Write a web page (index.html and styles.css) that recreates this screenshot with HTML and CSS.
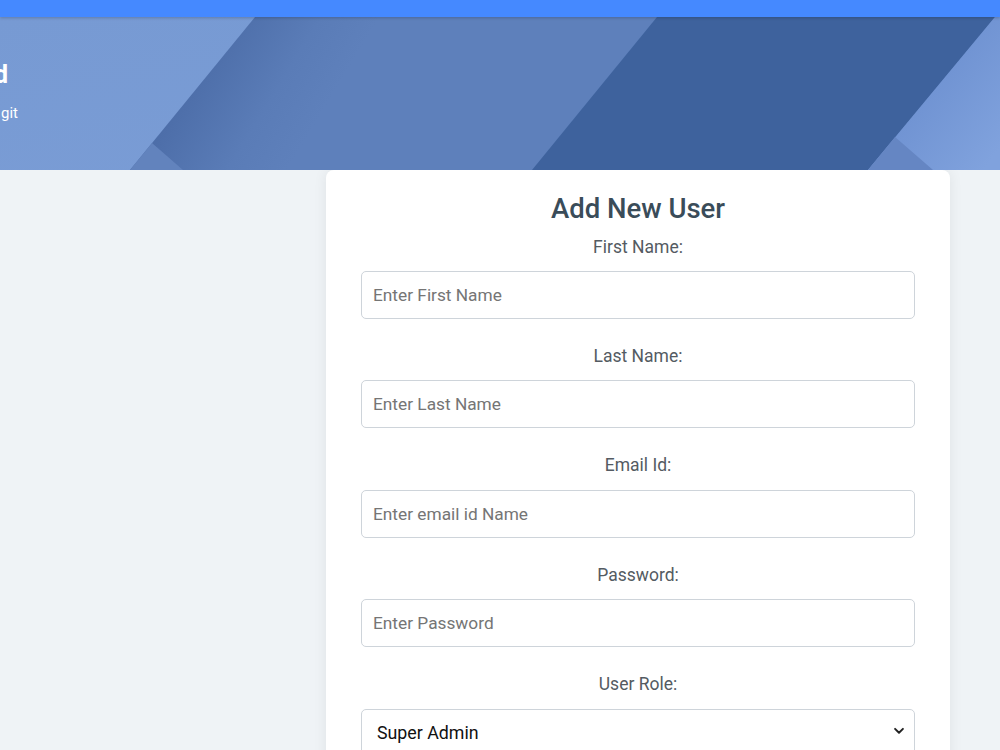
FILE: index.html
```html
<!doctype html>
<html>
<head>
    <title>Add New User</title>
    <link rel="stylesheet" href="styles.css">
</head>

<body>
    <div class="topbar"></div>

    <!-- page header with the polygon artwork -->
    <section class="hero">
        <svg class="hero-art" viewBox="0 0 1000 153" preserveAspectRatio="none">
            <defs>
                <linearGradient id="midShade" gradientUnits="userSpaceOnUse" x1="165" y1="110" x2="273" y2="176">
                    <stop offset="0" stop-color="#4d6ea9"/>
                    <stop offset="0.6" stop-color="#5a7cb7"/>
                    <stop offset="1" stop-color="#5e80bb"/>
                </linearGradient>
                <linearGradient id="rightShade" gradientUnits="userSpaceOnUse" x1="931" y1="76" x2="1000" y2="132">
                    <stop offset="0" stop-color="#7194d3"/>
                    <stop offset="1" stop-color="#80a2dd"/>
                </linearGradient>
                <linearGradient id="leftShade" x1="0" y1="0" x2="1" y2="1">
                    <stop offset="0" stop-color="#779ad3"/>
                    <stop offset="1" stop-color="#7b9dd6"/>
                </linearGradient>
            </defs>
            <rect width="1000" height="153" fill="url(#leftShade)"/>
            <polygon points="255,0 1000,0 1000,153 130,153" fill="url(#midShade)"/>
            <polygon points="152,126 183,153 130,153" fill="#6283bd"/>
            <polygon points="657,0 995,0 868,153 532,153" fill="#3e629d"/>
            <polygon points="995,0 1000,0 1000,153 868,153" fill="url(#rightShade)"/>
            <polygon points="895,120 933,153 868,153" fill="#6586c3"/>
        </svg>
        <div class="hero-text">
            <h1>Dashboard</h1>
            <p>Manage the users of this project from git</p>
        </div>
    </section>

    <main class="content">
        <div class="card">
            <h2>Add New User</h2>
            <form>
                <div class="field">
                    <label for="first">First Name:</label>
                    <input id="first" type="text" placeholder="Enter First Name">
                </div>
                <div class="field">
                    <label for="last">Last Name:</label>
                    <input id="last" type="text" placeholder="Enter Last Name">
                </div>
                <div class="field">
                    <label for="email">Email Id:</label>
                    <input id="email" type="email" placeholder="Enter email id Name">
                </div>
                <div class="field">
                    <label for="pass">Password:</label>
                    <input id="pass" type="password" placeholder="Enter Password">
                </div>
                <div class="field">
                    <label for="role">User Role:</label>
                    <div class="select-wrap">
                        <select id="role">
                            <option>Super Admin</option>
                            <option>Admin</option>
                            <option>User</option>
                        </select>
                        <svg class="chevron" viewBox="0 0 16 16">
                            <path d="M3.5 5.5l4.5 4.5 4.5-4.5" fill="none" stroke="#222" stroke-width="2.2" stroke-linecap="round" stroke-linejoin="round"/>
                        </svg>
                    </div>
                </div>
            </form>
        </div>
    </main>
</body>

</html>
```

FILE: styles.css
```css
html, body {
    margin: 0;
    font-family: Roboto, "Liberation Sans", sans-serif;
    background-color: #eff3f6;
}

.topbar {
    position: relative;
    z-index: 2;
    height: 17px;
    background-color: #4589ff;
    box-shadow: 0 1px 3px rgba(0, 0, 0, 0.2);
}

.hero {
    position: relative;
    height: 153px;
    overflow: hidden;
}

.hero-art {
    position: absolute;
    top: 0;
    left: 0;
    width: 100%;
    height: 100%;
}

.hero-text {
    position: relative;
    width: 500px;
    margin-left: -482px;
    padding-top: 43px;
    text-align: right;
    color: white;
}

.hero-text h1 {
    margin: 0 10px 12px 0;
    font-size: 25px;
    font-weight: 700;
    line-height: 1.2;
}

.hero-text p {
    margin: 0;
    font-size: 15px;
    line-height: 1.5;
}

.content {
    min-height: 580px;
}

.card {
    width: 624px;
    margin-left: 326px;
    padding: 23px 35px 10px;
    box-sizing: border-box;
    background-color: white;
    border-radius: 8px;
    box-shadow: 0 0 14px rgba(0, 0, 0, 0.07);
    text-align: center;
}

.card h2 {
    margin: 0 0 10px;
    font-size: 27.5px;
    font-weight: 500;
    line-height: 1.15;
    color: #3a4c59;
}

.field {
    margin-bottom: 25px;
}

.field label {
    display: block;
    margin-bottom: 11px;
    font-size: 17.5px;
    line-height: 1.45;
    color: #545b62;
}

.field input,
.field select {
    display: block;
    width: 100%;
    height: 48px;
    box-sizing: border-box;
    padding: 0 11px;
    font-family: inherit;
    font-size: 17.3px;
    color: #212529;
    background-color: white;
    border: 1px solid #ced4da;
    border-radius: 5px;
}

.field input::placeholder {
    color: #757575;
}

.select-wrap {
    position: relative;
}

.field select {
    padding-left: 15px;
    font-size: 17.8px;
    color: #111;
    appearance: none;
    -webkit-appearance: none;
}

.chevron {
    position: absolute;
    right: 9px;
    top: 15px;
    width: 14px;
    height: 14px;
    pointer-events: none;
}
```
